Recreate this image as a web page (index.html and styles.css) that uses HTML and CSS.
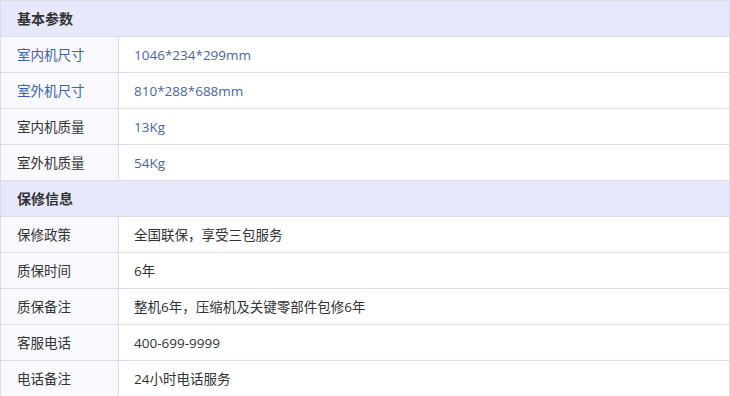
FILE: index.html
```html
<!DOCTYPE html>
<html lang="zh-CN">
<head>
<meta charset="utf-8">
<link rel="stylesheet" href="styles.css">
</head>
<body>
<table class="spec">
  <colgroup><col class="col-label"><col class="col-value"></colgroup>
  <tr class="group"><th colspan="2">基本参数</th></tr>
  <tr><td class="label link">室内机尺寸</td><td class="value link">1046*234*299mm</td></tr>
  <tr><td class="label link">室外机尺寸</td><td class="value link">810*288*688mm</td></tr>
  <tr><td class="label">室内机质量</td><td class="value link">13Kg</td></tr>
  <tr><td class="label">室外机质量</td><td class="value link">54Kg</td></tr>
  <tr class="group"><th colspan="2">保修信息</th></tr>
  <tr><td class="label">保修政策</td><td class="value">全国联保，享受三包服务</td></tr>
  <tr><td class="label">质保时间</td><td class="value">6年</td></tr>
  <tr><td class="label">质保备注</td><td class="value">整机6年，压缩机及关键零部件包修6年</td></tr>
  <tr><td class="label">客服电话</td><td class="value">400-699-9999</td></tr>
  <tr><td class="label">电话备注</td><td class="value">24小时电话服务</td></tr>
</table>
</body>
</html>
```
FILE: styles.css
```css
html, body {
  margin: 0;
  padding: 0;
  background: #ffffff;
}
body {
  font-family: "Open Sans", "Noto Sans CJK SC", sans-serif;
  font-size: 13.5px;
  color: #333333;
}
.spec {
  width: 730px;
  border-collapse: collapse;
  table-layout: fixed;
}
.col-label {
  width: 118px;
}
.spec th, .spec td {
  border: 1px solid #dcdce6;
  height: 35px;
  padding: 0;
  text-align: left;
  vertical-align: middle;
  line-height: 20px;
}
.spec tr.group th {
  background: #e8e8fc;
  font-weight: bold;
  font-size: 14px;
  padding-left: 16px;
  color: #333333;
}
.spec td.label {
  background: #f8f8fd;
  padding-left: 16px;
}
.spec td.value {
  background: #ffffff;
  padding-left: 15px;
}
.spec td.link {
  color: #4a64a8;
}
.spec td.label.link {
  color: #3a63b0;
}
```
